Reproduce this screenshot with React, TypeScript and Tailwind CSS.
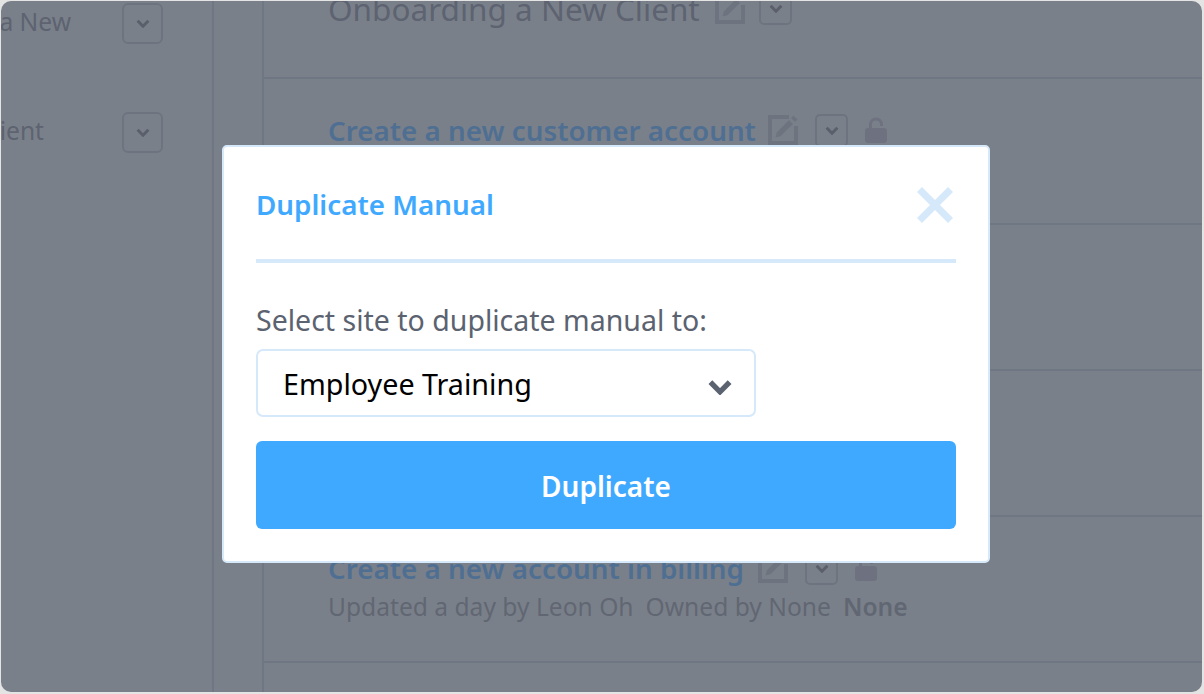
const font = { fontFamily: '"Noto Sans", sans-serif' }

const EditIcon = ({ className }: { className?: string }) => (
  <svg viewBox="0 0 30 30" className={className} fill="none">
    <path d="M21 2H2v26h26V11" stroke="currentColor" strokeWidth="4" />
    <path d="M7.5 22.5l1.2-5L21 5l4 4-12.5 12.3z" fill="currentColor" />
    <path d="M23 3l2.5-2.5 4 4L27 7z" fill="currentColor" />
  </svg>
)

const Chevron = ({ className }: { className?: string }) => (
  <svg viewBox="0 0 23 15" className={className} fill="none">
    <path d="M2.5 3l9 9 9-9" stroke="currentColor" strokeWidth="5" />
  </svg>
)

const LockIcon = () => (
  <svg viewBox="0 0 22 26" className="ml-[17px] h-[26px] w-[22px] text-[#6e7280]" fill="none">
    <path d="M5.5 12V7.5a5.5 5.5 0 0 1 11 0V9" stroke="currentColor" strokeWidth="3" />
    <rect x="0" y="11" width="22" height="15" rx="3" fill="currentColor" />
  </svg>
)

const ChevronButton = ({ size }: { size: 'sm' | 'lg' }) => (
  <div
    className={`flex items-center justify-center border-2 border-[#6e747f] ${
      size === 'lg' ? 'h-[41px] w-[41px] rounded-[6px]' : 'h-[33px] w-[33px] rounded-[5px]'
    }`}
  >
    <Chevron className="h-[9px] w-[14px] text-[#5a5f6b]" />
  </div>
)

const SidebarItem = ({ label, width }: { label: string; width: string }) => (
  <div className="flex h-[41px] items-center pb-[4px]">
    <div className={`flex justify-end overflow-hidden ${width}`}>
      <span className="whitespace-nowrap text-[24.6px] leading-[30px] text-[#5d6370]">{label}</span>
    </div>
  </div>
)

const Row = ({ title, width, updated }: { title: string; width: string; updated?: boolean }) => (
  <div className="h-[146px] border-b-2 border-[#6f7785] pl-[64px] pt-[31px]">
    <div className="flex items-center">
      <span className={`whitespace-nowrap text-[27.8px] font-semibold leading-[40px] text-[#4f6f92] ${width}`}>{title}</span>
      <EditIcon className="ml-[13px] h-[30px] w-[30px] text-[#6e747f]" />
      <div className="ml-[17px]">
        <ChevronButton size="sm" />
      </div>
      <LockIcon />
    </div>
    {updated && (
      <div className="mt-[3px] flex whitespace-nowrap text-[24.6px] leading-[32px] text-[#616772]">
        <span>Updated a day by Leon Oh</span>
        <span className="ml-[12px]">Owned by None</span>
        <span className="ml-[12px] font-semibold">None</span>
      </div>
    )}
  </div>
)

export default function App() {
  return (
    <div className="relative h-[694px] w-[1204px] overflow-hidden bg-[#e4e4e4] p-[1px]" style={font}>
      <div className="flex h-[691px] w-[1201px] overflow-hidden rounded-[10px] bg-[#7a808a]">
        <aside className="h-full w-[213px] shrink-0 border-r-2 border-[#6f7785]">
          <div className="flex justify-between pr-[49px] pt-[2px]">
            <SidebarItem label="Onboarding a New" width="w-[70px]" />
            <ChevronButton size="lg" />
          </div>
          <div className="mt-[68px] flex justify-between pr-[49px]">
            <SidebarItem label="Client" width="w-[43px]" />
            <ChevronButton size="lg" />
          </div>
        </aside>
        <main className="flex-1">
          <div className="ml-[48px] h-full border-l-2 border-[#6f7785]">
            <div className="flow-root h-[78px] border-b-2 border-[#6f7785] pl-[64px]">
              <div className="-mt-[14px] flex items-start">
                <span className="w-[373px] whitespace-nowrap text-[31.5px] leading-[44px] text-[#5d6370]">Onboarding a New Client</span>
                <EditIcon className="ml-[14px] mt-[7px] h-[30px] w-[30px] text-[#6e747f]" />
                <div className="ml-[14px] mt-[5px]">
                  <ChevronButton size="sm" />
                </div>
              </div>
            </div>
            <Row title="Create a new customer account" width="w-[427px]" />
            <Row title="Create a new customer account" width="w-[427px]" />
            <Row title="Create a new customer account" width="w-[427px]" />
            <Row title="Create a new account in billing" width="w-[417px]" updated />
          </div>
        </main>
      </div>

      <div className="absolute left-[222px] top-[145px] h-[418px] w-[768px] rounded-[5px] border-2 border-[#d5e9fa] bg-white px-[32px]">
        <div className="flex h-[116px] items-center justify-between border-b-[4px] border-[#d5e9fa]">
          <span className="mt-[1px] text-[27.8px] font-semibold leading-[40px] text-[#3fa9ff]">Duplicate Manual</span>
          <svg viewBox="0 0 36 36" className="mr-[3px] mt-[3px] h-[36px] w-[36px] text-[#d5e9fa]" fill="none">
            <path d="M2.5 2.5l31 31M33.5 2.5l-31 31" stroke="currentColor" strokeWidth="7" />
          </svg>
        </div>
        <div className="mt-[37px] text-[28.5px] leading-[40px] text-[#5b6270]">Select site to duplicate manual to:</div>
        <div className="mt-[9px] flex h-[68px] w-[500px] items-center justify-between rounded-[7px] border-2 border-[#d5e9fa] pl-[25px] pr-[21px]">
          <span className="mt-[2px] text-[28.7px] leading-[40px] text-black">Employee Training</span>
          <Chevron className="mt-[8px] h-[16px] w-[26px] text-[#5b6270]" />
        </div>
        <button className="mt-[24px] flex h-[88px] w-[700px] items-center justify-center rounded-[6px] bg-[#3fa9ff] pt-[2px] text-[28px] font-semibold text-white">
          Duplicate
        </button>
      </div>
    </div>
  )
}
